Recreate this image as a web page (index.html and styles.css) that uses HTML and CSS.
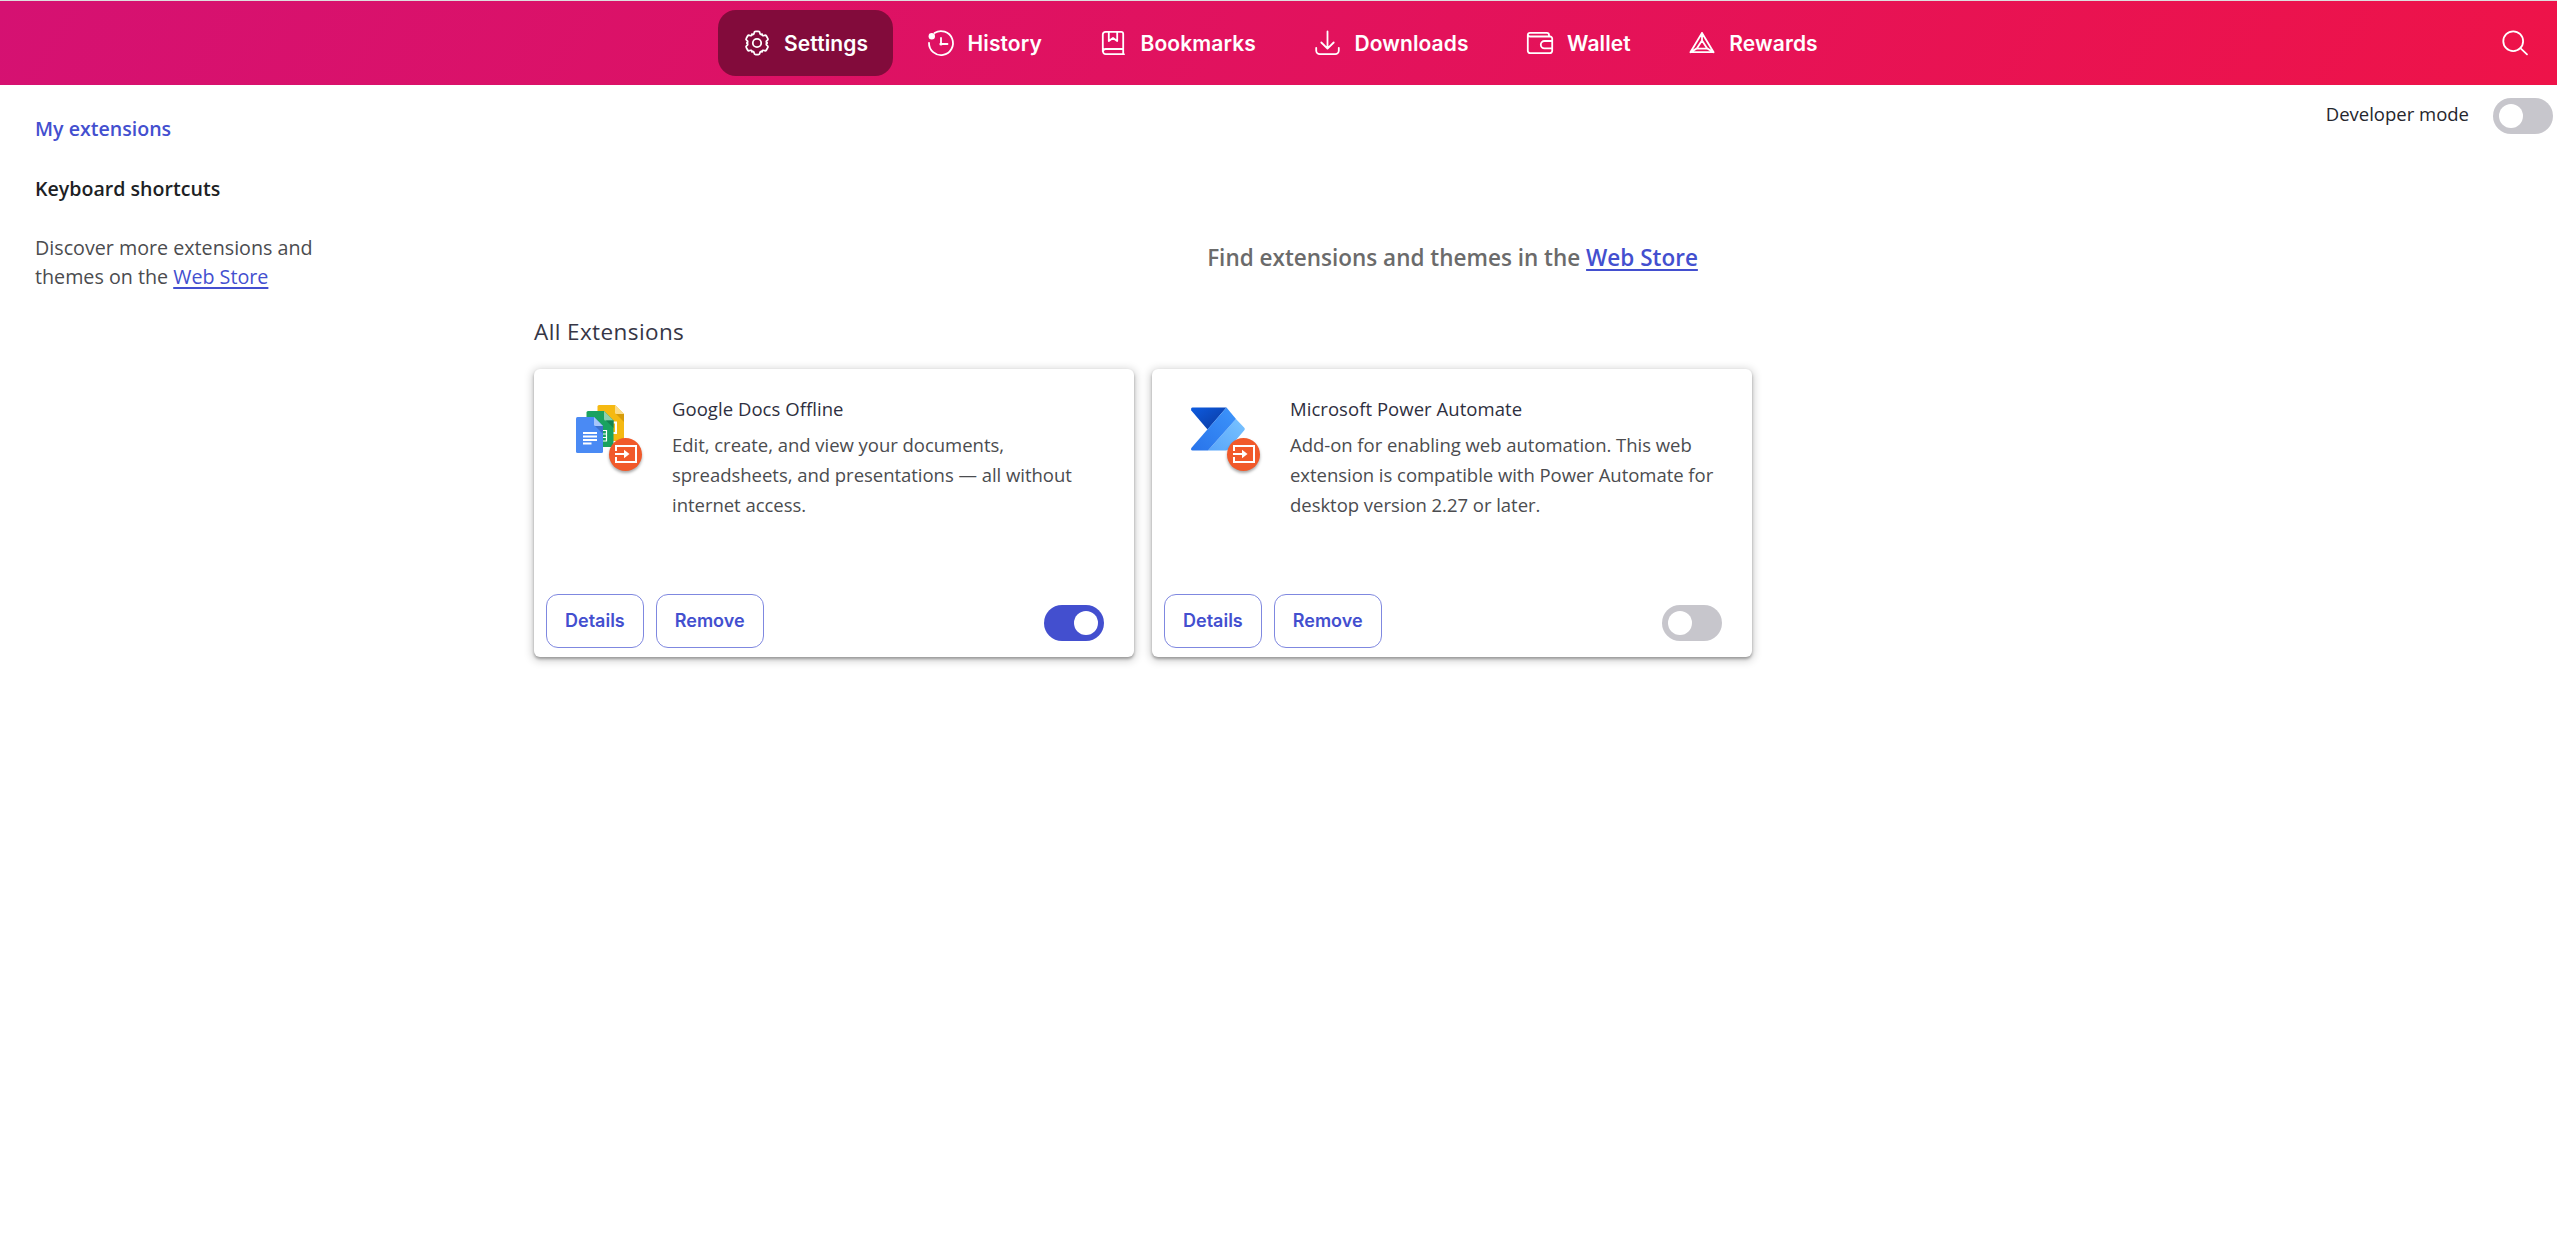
FILE: index.html
```html
<!DOCTYPE html>
<html lang="en">
<head>
<meta charset="utf-8">
<title>Extensions</title>
<link rel="stylesheet" href="styles.css">
</head>
<body>
<svg class="defs" width="0" height="0" aria-hidden="true">
  <defs>
    <path id="tooth" d="M-5-8.7C-3.7-8.1-3-8.9-2.9-10C-2.8-11.2-2.3-11.6-1.3-11.6H1.3C2.3-11.6 2.8-11.2 2.9-10C3-8.900 3.700-8.100 5-8.700"/>
    <g id="badge">
      <path d="M7 13V8H27V24H7V19" fill="none" stroke="#fff" stroke-width="2"/>
      <path d="M6 16H17" stroke="#fff" stroke-width="2"/>
      <path d="M15 11.800L20.500 16L15 20.200Z" fill="#fff"/>
    </g>
  </defs>
</svg>

<header class="topbar">
  <nav class="nav">
    <a class="nav-item active">
      <svg class="icon" viewBox="0 0 30 30">
        <g transform="translate(15 15)">
          <use href="#tooth"/><use href="#tooth" transform="rotate(60)"/><use href="#tooth" transform="rotate(120)"/>
          <use href="#tooth" transform="rotate(180)"/><use href="#tooth" transform="rotate(240)"/><use href="#tooth" transform="rotate(300)"/>
          <circle r="4.2"/>
        </g>
      </svg>
      <span>Settings</span>
    </a>
    <a class="nav-item">
      <svg class="icon" viewBox="0 0 30 30">
        <path d="M8.5 5A12 12 0 1 1 3 14.8"/>
        <circle class="solid" cx="5.8" cy="8.3" r="3.2"/>
        <path d="M15 10V16H21.5"/><circle class="solid" cx="15" cy="16" r="1.6"/>
      </svg>
      <span>History</span>
    </a>
    <a class="nav-item">
      <svg class="icon" viewBox="0 0 30 30">
        <path d="M4.8 23.5V6.5A2.8 2.8 0 0 1 7.6 3.8H23.2A2 2 0 0 1 25.2 5.8V26.2M26 26.2H7.6A2.6 2.6 0 0 1 7.6 21H25.2M10.8 3.8V13L15 10L19.2 13V3.8"/>
      </svg>
      <span>Bookmarks</span>
    </a>
    <a class="nav-item">
      <svg class="icon" viewBox="0 0 30 30">
        <path d="M15.5 3.5V20.5M9.3 14.5L15.5 20.7L21.7 14.5M4.2 19.8V22.6A3.6 3.6 0 0 0 7.8 26.2H23.2A3.6 3.6 0 0 0 26.8 22.6V19.8"/>
      </svg>
      <span>Downloads</span>
    </a>
    <a class="nav-item">
      <svg class="icon" viewBox="0 0 30 30">
        <path d="M24 8.5V7A2.2 2.2 0 0 0 21.8 4.8H5A2.2 2.2 0 0 0 2.8 7V22.8A2.4 2.4 0 0 0 5.2 25.2H24.8A2.4 2.4 0 0 0 27.2 22.8V10.7A2.2 2.2 0 0 0 25 8.5H5A2.2 2.2 0 0 1 2.8 6.8M27.2 13H19.5A3.6 3.6 0 0 0 19.5 20.4H27.2"/>
      </svg>
      <span>Wallet</span>
    </a>
    <a class="nav-item">
      <svg class="icon" viewBox="0 0 30 30">
        <path d="M15 5L3.4 24.2H26.6ZM15 5V12.4M3.4 24.2L9.5 20.6M26.6 24.2L20.5 20.6M15 12.4L9.8 20.6H20.2Z"/>
      </svg>
      <span>Rewards</span>
    </a>
  </nav>
  <svg class="icon" viewBox="0 0 30 30">
    <circle cx="13.2" cy="13.2" r="9.9"/><path d="M20.4 20.2L27 26.3"/>
  </svg>
</header>

<div class="layout">
  <aside class="sidebar">
    <a class="side-link selected">My extensions</a>
    <a class="side-link">Keyboard shortcuts</a>
    <p class="discover">Discover more extensions and<br>themes on the <a class="link">Web Store</a></p>
  </aside>

  <main class="content">
    <div class="dev-row">
      <span>Developer mode</span>
      <span class="toggle"></span>
    </div>
    <h2 class="promo">Find extensions and themes in the <a class="link">Web Store</a></h2>
    <h3 class="section-title">All Extensions</h3>

    <div class="cards">
      <article class="card">
        <div class="info">
          <div class="logo">
            <svg width="60" height="60" viewBox="0 0 60 60">
              <path d="M29 0H45L54 9V34.500A1.500 1.500 0 0 1 52.500 36H29A1.500 1.500 0 0 1 27.500 34.500V1.500A1.500 1.500 0 0 1 29 0Z" fill="#f5b912"/>
              <path d="M45 0L54 9H46.500A1.500 1.500 0 0 1 45 7.500Z" fill="#fbdc88"/>
              <path d="M54 9V17L46 9Z" fill="#d79c0a"/>
              <path d="M43 17.500H46V28H43" fill="none" stroke="#fff" stroke-width="2"/>
              <path d="M18 6H34L43.500 15.500V40.500A1.500 1.500 0 0 1 42 42H18A1.500 1.500 0 0 1 16.500 40.500V7.500A1.500 1.500 0 0 1 18 6Z" fill="#1aa260"/>
              <path d="M34 6L43.500 15.500H35.500A1.500 1.500 0 0 1 34 14Z" fill="#8dd0af"/>
              <path d="M43.500 15.500V23L36 15.500Z" fill="#158250"/>
              <path d="M32 25.500H36.500V36H32M32 29H36.500M32 32.500H36.500" fill="none" stroke="#fff" stroke-width="1.200"/>
              <path d="M7.500 12H24L33 21V46.500A1.500 1.500 0 0 1 31.500 48H7.500A1.500 1.500 0 0 1 6 46.500V13.500A1.500 1.500 0 0 1 7.500 12Z" fill="#4a8af4"/>
              <path d="M24 12L33 21H25.500A1.500 1.500 0 0 1 24 19.500Z" fill="#a6c5fa"/>
              <path d="M33 21V29L25 21Z" fill="#3b70cc"/>
              <path d="M13 28H27M13 31.500H27M13 35H27M13 38.500H21.500" stroke="#fff" stroke-width="1.800"/>
            </svg>
            <svg class="badge" viewBox="0 0 33 33"><use href="#badge"/></svg>
          </div>
          <div>
            <h4 class="name">Google Docs Offline</h4>
            <p class="desc">Edit, create, and view your documents,<br>spreadsheets, and presentations — all without<br>internet access.</p>
          </div>
        </div>
        <div class="actions">
          <button class="btn">Details</button>
          <button class="btn">Remove</button>
          <span class="toggle on"></span>
        </div>
      </article>

      <article class="card">
        <div class="info">
          <div class="logo">
            <svg width="60" height="60" viewBox="0 0 60 60">
              <defs>
                <linearGradient id="pa1" x1="0" y1="0" x2="1" y2="1"><stop offset="0" stop-color="#0d5be0"/><stop offset="1" stop-color="#0b389c"/></linearGradient>
                <linearGradient id="pa2" x1="1" y1="0" x2="0" y2="1"><stop offset="0" stop-color="#3d95fb"/><stop offset="1" stop-color="#2873ea"/></linearGradient>
                <linearGradient id="pa3" x1="1" y1="0" x2="0" y2="1"><stop offset="0" stop-color="#79c3ff"/><stop offset="1" stop-color="#58a5fa"/></linearGradient>
              </defs>
              <path d="M4.500 2.500H38.500L19.500 24.500L3.300 5.500Q2.500 2.500 4.500 2.500Z" fill="url(#pa1)"/>
              <path d="M48 14L56.300 22.800Q57.500 24 56.300 25.200L40 44.500Q39 45.500 37.500 45.500H20Z" fill="url(#pa3)"/>
              <path d="M38.500 2.500L48 14L20 45.500H4.500Q2.500 45.500 3.300 43Z" fill="url(#pa2)"/>
            </svg>
            <svg class="badge" viewBox="0 0 33 33"><use href="#badge"/></svg>
          </div>
          <div>
            <h4 class="name">Microsoft Power Automate</h4>
            <p class="desc">Add-on for enabling web automation. This web<br>extension is compatible with Power Automate for<br>desktop version 2.27 or later.</p>
          </div>
        </div>
        <div class="actions">
          <button class="btn">Details</button>
          <button class="btn">Remove</button>
          <span class="toggle"></span>
        </div>
      </article>
    </div>
  </main>
</div>
</body>
</html>
```
FILE: styles.css
```css
* { box-sizing: border-box; }
body {
  margin: 0;
  min-height: 1252px;
  background: #fff;
  font-family: "Open Sans", "Noto Sans", sans-serif;
}
h2, h3, h4, p { margin: 0; font-weight: 400; }
.defs { position: absolute; }

.topbar {
  height: 85px;
  padding: 0 27px 0 718px;
  border-top: 1px solid #dedede;
  background: linear-gradient(120deg, #d51172, #ee1349);
  display: flex;
  align-items: center;
  justify-content: space-between;
}
.nav { display: flex; gap: 8.5px; }
.nav-item {
  height: 66px;
  padding: 0 24px;
  border-radius: 18px;
  display: flex;
  align-items: center;
  gap: 12px;
  color: #fff;
  font: 600 21px/30px Inter, sans-serif;
  letter-spacing: .1px;
}
.nav-item span { padding-top: 2px; }
.nav-item.active { background: #820b3b; padding-right: 25px; }
.icon {
  width: 30px;
  height: 30px;
  flex: none;
  fill: none;
  stroke: #fff;
  stroke-width: 1.8;
  stroke-linecap: round;
  stroke-linejoin: round;
}
.icon .solid { fill: #fff; stroke: none; }

.layout { display: flex; }
.sidebar {
  width: 534px;
  flex: none;
  padding: 14px 36px 0 35px;
  font-size: 19.7px;
}
.side-link {
  display: block;
  line-height: 60px;
  font-size: 19.6px;
  font-weight: 600;
  color: #1d1f25;
}
.side-link.selected { color: #434fcf; }
.discover { margin-top: 14px; line-height: 29px; color: #4b4c4f; }
.link {
  color: #434fcf;
  text-decoration: underline;
  text-decoration-thickness: 2px;
  text-underline-offset: 3px;
}

.content { flex: 1; }
.dev-row {
  height: 61px;
  padding: 13px 4px 0 0;
  display: flex;
  justify-content: flex-end;
  gap: 24px;
  font-size: 18.5px;
  line-height: 32px;
  color: #25262d;
}
.toggle {
  width: 60px;
  height: 36px;
  padding: 6px;
  border-radius: 18px;
  background: #c7c6cc;
  display: flex;
}
.toggle::before {
  content: "";
  width: 24px;
  height: 24px;
  border-radius: 50%;
  background: #fff;
}
.toggle.on { background: #434fcf; justify-content: flex-end; }

.promo {
  width: 1837px;
  margin-top: 97px;
  text-align: center;
  font-size: 22.5px;
  line-height: 30px;
  font-weight: 600;
  color: #6b6b6b;
}
.section-title {
  margin-top: 44px;
  font-size: 22.5px;
  line-height: 30px;
  letter-spacing: .4px;
  color: #363646;
}

.cards { margin-top: 22px; display: flex; gap: 18px; }
.card {
  width: 600px;
  height: 288px;
  border-radius: 6px;
  background: #fff;
  box-shadow: 0 2px 3px rgba(0, 0, 0, .3), 0 2px 9px 2px rgba(0, 0, 0, .18);
  display: flex;
  flex-direction: column;
  justify-content: space-between;
}
.info { padding: 25px 0 0 36px; display: flex; gap: 42px; }
.logo { position: relative; width: 60px; height: 60px; margin-top: 11px; }
.badge {
  position: absolute;
  left: 39px;
  top: 33px;
  width: 33px;
  height: 33px;
  border-radius: 50%;
  background: #f1592a;
  box-shadow: 0 2px 3px rgba(0, 0, 0, .35);
}
.name, .desc { font-size: 18.5px; line-height: 30px; }
.name { color: #2e2f40; margin-bottom: 6px; letter-spacing: .05px; }
.desc { color: #4b4c4f; letter-spacing: -.03px; }
.actions { padding: 0 30px 9px 12px; display: flex; gap: 12px; }
.actions .toggle { margin: 11px 0 0 auto; }
.btn {
  height: 54px;
  padding: 0 18px;
  border: 1px solid #7f88e0;
  border-radius: 12px;
  background: #fff;
  color: #434fcf;
  font: 600 18px/24px Inter, sans-serif;
}
```
